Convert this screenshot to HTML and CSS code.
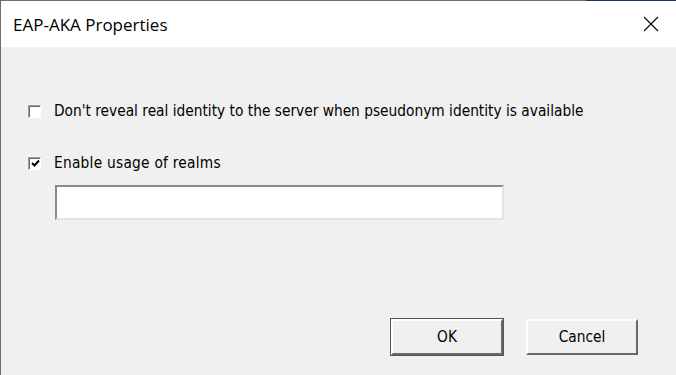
FILE: index.html
```html
<!DOCTYPE html>
<html>
<head>
    <title>EAP-AKA Properties</title>
    <link rel="stylesheet" href="styles.css">
</head>
<body>
    <div class="window">
        <div class="titlebar">
            <span class="title">EAP-AKA Properties</span>
            <span class="close">
                <svg width="16" height="16" viewBox="0 0 16 16">
                    <path d="M1 1 L15 15 M15 1 L1 15" stroke="#000" stroke-width="1.1" fill="none"/>
                </svg>
            </span>
        </div>
        <div class="content">
            <label class="check">
                <span class="box"></span>
                <span>Don't reveal real identity to the server when pseudonym identity is available</span>
            </label>
            <label class="check">
                <span class="box checked">
                    <svg width="9" height="9" viewBox="0 0 9 9">
                        <path d="M1 4 L3.5 6.5 L8 1.5" stroke="#000" stroke-width="2" fill="none"/>
                    </svg>
                </span>
                <span class="realms">Enable usage of realms</span>
            </label>
            <div class="field"></div>
            <div class="buttons">
                <div class="btn default"><span>OK</span></div>
                <div class="btn"><span>Cancel</span></div>
            </div>
        </div>
    </div>
</body>
</html>
```

FILE: styles.css
```css
body { margin: 0; background: #f0f0f0; font-family: Tahoma, "DejaVu Sans Condensed", "DejaVu Sans", sans-serif; }
.window { width: 676px; height: 375px; box-sizing: border-box; border-left: 1px solid #6e6e6e; border-top: 1px solid #6e6e6e; position: relative; display: flex; flex-direction: column; }
.window::after { content: ""; position: absolute; top: -1px; left: 585px; right: 0; height: 1px; background: #1b3461; }
.titlebar { height: 46px; background: #fff; display: flex; align-items: center; justify-content: space-between; padding-left: 12px; }
.title { font-family: "Open Sans", "Noto Sans", sans-serif; font-size: 17px; color: #000; margin-top: 1px; }
.close { width: 46px; display: flex; justify-content: center; margin-right: 2px; }
.content { flex: 1; background: #f0f0f0; padding: 56px 0 0 27px; font-size: 15.3px; color: #000; }
.check { display: flex; align-items: center; gap: 13px; height: 16px; }
.check + .check { margin-top: 36px; }
.realms { letter-spacing: 0.25px; }
.box { width: 11px; height: 11px; background: #fff; border-top: 1px solid #a0a0a0; border-left: 1px solid #a0a0a0; border-right: 1px solid #fff; border-bottom: 1px solid #fff; box-shadow: inset 1px 1px 0 #696969; display: flex; align-items: center; justify-content: center; }
.box.checked svg { margin: 1px 0 0 1px; }
.field { margin: 14px 0 0 27px; width: 445px; height: 31px; background: #fff; border-top: 2px solid #8a8a8a; border-left: 2px solid #8a8a8a; border-right: 2px solid #e3e3e3; border-bottom: 2px solid #e3e3e3; }
.buttons { display: flex; gap: 23px; margin: 99px 0 0 363px; }
.btn { width: 108px; height: 32px; box-sizing: content-box; border-top: 2px solid #fff; border-left: 2px solid #fff; border-right: 2px solid #696969; border-bottom: 2px solid #696969; background: #f0f0f0; display: flex; align-items: center; justify-content: center; font-size: 15.3px; }
.btn.default { outline: 1px solid #555; }
```
